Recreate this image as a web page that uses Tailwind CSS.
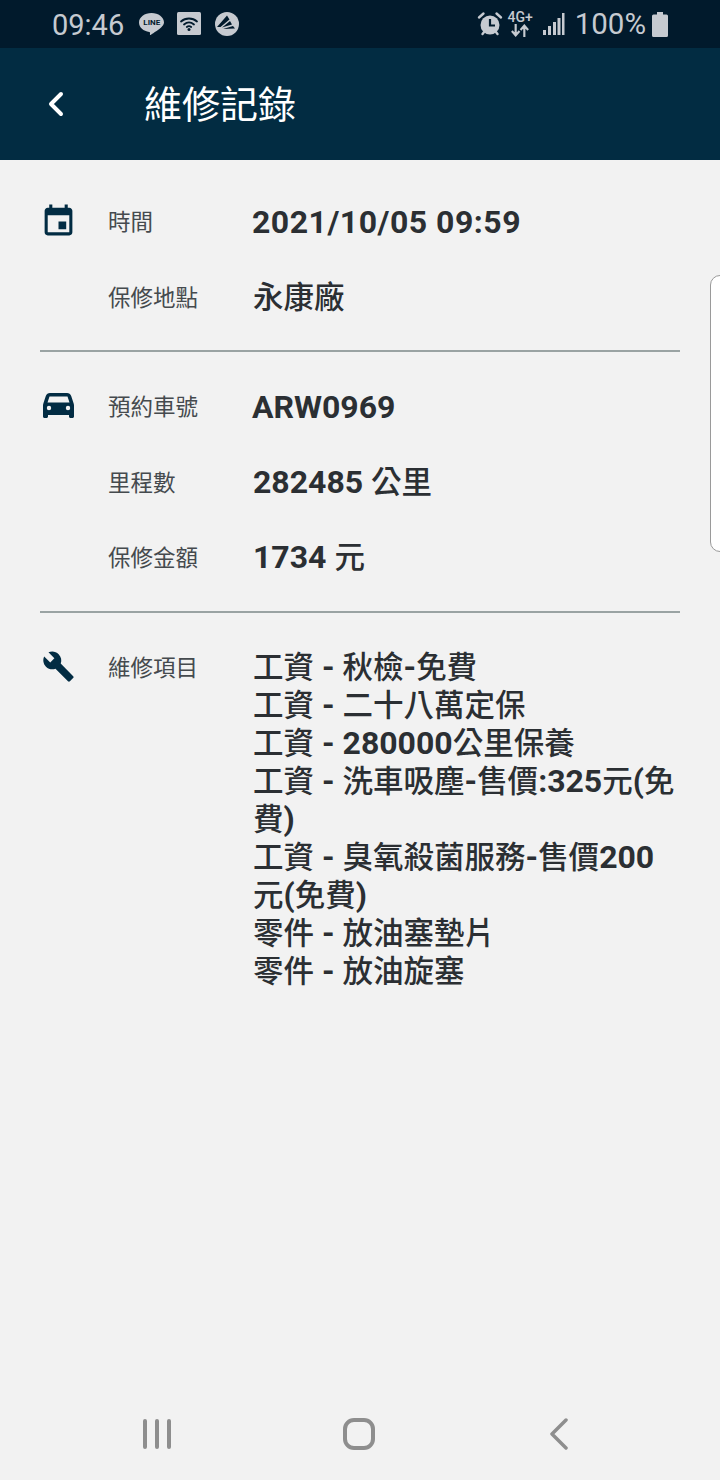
<!DOCTYPE html>
<html lang="zh-Hant">
<head>
  <meta charset="UTF-8">
  <meta name="viewport" content="width=device-width, initial-scale=1.0">
  <title>維修記錄</title>
  <script src="https://cdn.jsdelivr.net/npm/@tailwindcss/browser@4"></script>
</head>
<body class="bg-[#f2f2f2] font-['Roboto','Noto_Sans_CJK_TC',sans-serif]">
  <div class="relative w-[720px] h-[1480px] overflow-hidden flex flex-col">

    <!-- Status bar -->
    <div class="h-[48px] bg-[#011a2c] text-[#c6cad0] flex items-center justify-between pl-[52px] pr-[52px]">
      <div class="flex items-center">
        <span class="pt-[2px] text-[29px] leading-none">09:46</span>
        <div class="relative ml-[14px] w-[27px] h-[25px]">
          <svg class="w-[27px] h-[25px]" viewBox="0 0 27 25" fill="currentColor"><path d="M13.5 1C6.6 1 1 5.2 1 10.5c0 4.8 4.4 8.7 10.3 9.4.9.2.8 1 .6 2.3-.1.7.4.9 1.1.5 2-1.2 9.2-5.7 11.4-8.6 1-1.3 1.6-2.6 1.6-3.6C26 5.2 20.4 1 13.5 1z"/></svg>
          <span class="absolute left-0 top-[6px] w-[27px] text-center text-[8px] leading-[9px] font-bold text-[#011a2c]">LINE</span>
        </div>
        <svg class="ml-[12px] w-[24px] h-[24px]" viewBox="0 0 24 24"><rect width="24" height="23" rx="1.5" fill="currentColor"/><g fill="none" stroke="#011a2c" stroke-width="1.8" stroke-linecap="round"><path d="M4 9.5c4.500-4 11.500-4 16 0"/><path d="M7 12.500c3-2.500 7-2.500 10 0"/><path d="M9.800 15c1.300-1 3.100-1 4.400 0"/></g><circle cx="12" cy="17.500" r="1.500" fill="#011a2c"/></svg>
        <svg class="ml-[14px] w-[24px] h-[24px]" viewBox="0 0 24 24"><circle cx="12" cy="12" r="12" fill="currentColor"/><path d="M2 15 12 3.500l2.500 4L5.500 15zM7 15.500l8-6.500 2 3.500zM8 17l10-3 2 2.500z" fill="#011a2c"/></svg>
      </div>
      <div class="flex items-center">
        <svg class="w-[26px] h-[26px]" viewBox="0 0 26 26" fill="none"><circle cx="13" cy="14" r="9.500" fill="currentColor"/><path d="M13 8v6.500h5" stroke="#011a2c" stroke-width="2.200"/><path d="M2 6.500 6.500 2.500M24 6.500 19.500 2.500M5.500 23l2-2.500M20.500 23l-2-2.500" stroke="currentColor" stroke-width="2.400" stroke-linecap="round"/></svg>
        <div class="ml-[5px] w-[25px] flex flex-col items-center">
          <span class="text-[14px] leading-[13px] font-medium">4G+</span>
          <svg class="w-[20px] h-[13px]" viewBox="0 0 18 12" fill="none" stroke="currentColor" stroke-width="2"><path d="M5 0v10M1.500 6.500 5 10.500l3.500-4M13 12V2M9.500 5.500 13 1.500l3.500 4"/></svg>
        </div>
        <svg class="ml-[10px] w-[22px] h-[24px]" viewBox="0 0 22 24" fill="currentColor"><rect x="0" y="18" width="3" height="5"/><rect x="5" y="14" width="3" height="9"/><rect x="10" y="10" width="3" height="13"/><rect x="14.500" y="6" width="3" height="17"/><rect x="19" y="1" width="2.500" height="22"/></svg>
        <span class="ml-[10px] pt-[2px] text-[29.500px] leading-none">100%</span>
        <svg class="ml-[6px] w-[16px] h-[25px]" viewBox="0 0 16 25" fill="currentColor"><path d="M5 0h6v2.500h3.500a1.500 1.500 0 0 1 1.500 1.500v19.500a1.500 1.500 0 0 1-1.500 1.500h-13A1.500 1.500 0 0 1 0 23.500V4a1.500 1.500 0 0 1 1.500-1.500H5z"/></svg>
      </div>
    </div>

    <!-- Title bar -->
    <div class="h-[112px] bg-[#022c42] flex items-center text-white">
      <svg class="ml-[47px] w-[18px] h-[26px]" viewBox="0 0 18 26" fill="none" stroke="currentColor" stroke-width="4" stroke-linecap="round" stroke-linejoin="round"><path d="M14 3 4 13l10 10"/></svg>
      <h1 class="ml-[79px] pt-[2px] text-[38px] leading-none font-normal">維修記錄</h1>
    </div>

    <!-- Body -->
    <main class="flex-1 px-[40px] pt-[43px] text-[#2b2f33]">
      <section class="flex flex-col gap-[38px] pb-[33px] border-b-2 border-[#9aa3a3]">
        <div class="flex">
          <div class="w-[68px] shrink-0">
            <svg class="w-[37px] h-[37px] text-[#022c43]" viewBox="0 0 24 24" fill="currentColor"><path d="M17 12h-5v5h5v-5zM16 1v2H8V1H6v2H5c-1.110 0-1.990.9-1.990 2L3 19c0 1.100.89 2 2 2h14c1.100 0 2-.9 2-2V5c0-1.100-.9-2-2-2h-1V1h-2zm3 18H5V8h14v11z"/></svg>
          </div>
          <div class="w-[145px] shrink-0 text-[22.500px] leading-[38px] text-[#454a4e]">時間</div>
          <div class="text-[32px] leading-[38px] font-bold tracking-[0.500px] -ml-[1px]">2021/10/05 09:59</div>
        </div>
        <div class="flex">
          <div class="w-[68px] shrink-0"></div>
          <div class="w-[145px] shrink-0 text-[22.500px] leading-[38px] text-[#454a4e]">保修地點</div>
          <div class="text-[30.500px] leading-[38px] font-medium">永康廠</div>
        </div>
      </section>

      <section class="flex flex-col gap-[37.500px] pt-[36px] pb-[34px] border-b-2 border-[#9aa3a3]">
        <div class="flex">
          <div class="w-[68px] shrink-0">
            <svg class="mt-[5px] ml-[3px] w-[31px] h-[25px] text-[#022c43]" viewBox="0 0 31 25" fill="currentColor" fill-rule="evenodd"><path d="M7 0h17c2 0 3.500 1 4.200 3l2.300 7c.3.8.5 1.500.5 2.500v11c0 .8-.7 1.500-1.500 1.500h-2c-.8 0-1.500-.7-1.500-1.500V22H5v1.500c0 .8-.7 1.500-1.500 1.500h-2C.7 25 0 24.300 0 23.500v-11c0-1 .2-1.700.5-2.500l2.300-7C3.500 1 5 0 7 0zM6.500 3.500h18l2 6h-22zM6 12.800a2.200 2.200 0 1 0 0 4.400 2.200 2.200 0 0 0 0-4.400zM25 12.800a2.200 2.200 0 1 0 0 4.400 2.200 2.200 0 0 0 0-4.400z"/></svg>
          </div>
          <div class="w-[145px] shrink-0 text-[22.500px] leading-[38px] text-[#454a4e]">預約車號</div>
          <div class="text-[32px] leading-[38px] font-bold -ml-[1px]">ARW0969</div>
        </div>
        <div class="flex">
          <div class="w-[68px] shrink-0"></div>
          <div class="w-[145px] shrink-0 text-[22.500px] leading-[38px] text-[#454a4e]">里程數</div>
          <div class="text-[30.500px] leading-[38px] font-medium"><span class="text-[32px] leading-none font-bold">282485 </span>公里</div>
        </div>
        <div class="flex">
          <div class="w-[68px] shrink-0"></div>
          <div class="w-[145px] shrink-0 text-[22.500px] leading-[38px] text-[#454a4e]">保修金額</div>
          <div class="text-[30.500px] leading-[38px] font-medium"><span class="text-[32px] leading-none font-bold">1734 </span>元</div>
        </div>
      </section>

      <section class="flex pt-[36px]">
        <div class="w-[68px] shrink-0">
          <svg class="mt-[1px] ml-[2px] w-[33px] h-[33px] text-[#022c43]" viewBox="0 0 24 24" fill="currentColor"><path d="M22.700 19l-9.100-9.100c.9-2.300.4-5-1.500-6.900-2-2-5-2.400-7.400-1.300L9 6 6 9 1.600 4.700C.4 7.100.9 10.100 2.900 12.100c1.900 1.900 4.600 2.400 6.900 1.500l9.100 9.100c.4.4 1 .4 1.400 0l2.300-2.300c.5-.4.5-1.100.1-1.400z"/></svg>
        </div>
        <div class="w-[145px] shrink-0 text-[22.500px] leading-[38px] text-[#454a4e]">維修項目</div>
        <div class="flex-1 text-[30.500px] leading-[38px] font-medium">
          <p>工資<span class="text-[32px] leading-none font-bold"> - </span>秋檢<span class="text-[32px] leading-none font-bold">-</span>免費</p>
          <p>工資<span class="text-[32px] leading-none font-bold"> - </span>二十八萬定保</p>
          <p>工資<span class="text-[32px] leading-none font-bold"> - 280000</span>公里保養</p>
          <p>工資<span class="text-[32px] leading-none font-bold"> - </span>洗車吸塵<span class="text-[32px] leading-none font-bold">-</span>售價<span class="text-[32px] leading-none font-bold">:325</span>元<span class="text-[32px] leading-none font-bold">(</span>免費<span class="text-[32px] leading-none font-bold">)</span></p>
          <p>工資<span class="text-[32px] leading-none font-bold"> - </span>臭氧殺菌服務<span class="text-[32px] leading-none font-bold">-</span>售價<span class="text-[32px] leading-none font-bold">200</span>元<span class="text-[32px] leading-none font-bold">(</span>免費<span class="text-[32px] leading-none font-bold">)</span></p>
          <p>零件<span class="text-[32px] leading-none font-bold"> - </span>放油塞墊片</p>
          <p>零件<span class="text-[32px] leading-none font-bold"> - </span>放油旋塞</p>
        </div>
      </section>
    </main>

    <!-- Navigation bar -->
    <nav class="h-[92px] pb-[1px] flex items-center text-[#8e8e8e]">
      <div class="w-[314px] flex justify-end pr-[141px]">
        <svg class="w-[32px] h-[32px]" viewBox="0 0 32 32" fill="none" stroke="currentColor" stroke-width="4" stroke-linecap="round"><path d="M4 3v26M16 3v26M28 3v26"/></svg>
      </div>
      <svg class="ml-[29px] w-[32px] h-[32px]" viewBox="0 0 32 32" fill="none" stroke="currentColor" stroke-width="4"><rect x="2" y="2" width="28" height="28" rx="9"/></svg>
      <svg class="ml-[174px] w-[20px] h-[32px]" viewBox="0 0 20 32" fill="none" stroke="currentColor" stroke-width="3.500" stroke-linecap="round" stroke-linejoin="round"><path d="M17 2 3 16l14 14"/></svg>
    </nav>

    <!-- Edge panel handle -->
    <div class="absolute left-[710px] top-[275px] w-[20px] h-[277px] bg-white border border-[#9a9a9a] rounded-[12px]"></div>
  </div>
</body>
</html>
